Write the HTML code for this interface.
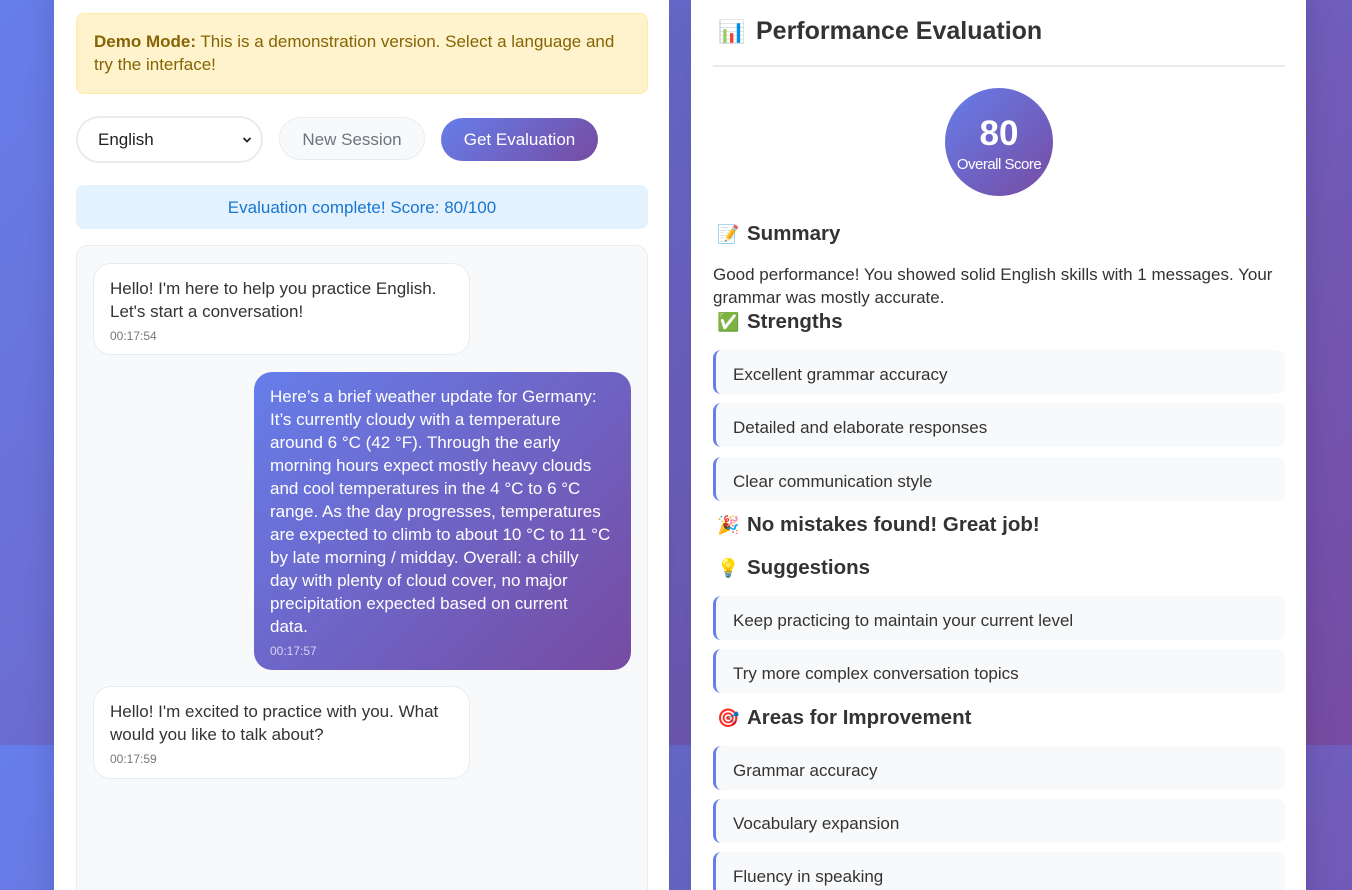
<!DOCTYPE html>
<html><head><meta charset="utf-8"><style>
*{box-sizing:border-box;margin:0;padding:0}
html,body{width:1352px;height:890px;overflow:hidden}
body{font-family:"Liberation Sans","Noto Sans CJK SC",sans-serif;color:#333;background:linear-gradient(135deg,#667eea 0%,#764ba2 100%);background-size:1352px 745px;background-repeat:repeat-y;position:relative}
.card{position:absolute;top:-20px;width:615px;height:940px;background:#fff;border-radius:16px;box-shadow:0 8px 30px rgba(0,0,0,.15)}
.l{left:54px}.r{left:691px}
.abs{position:absolute}
.demo{left:22px;top:33px;width:572px;height:81px;background:#fff3cd;border:1px solid #ffeaa7;border-radius:8px;color:#856404;font-size:17px;padding:16px 17px;line-height:23px;white-space:nowrap}
.sel{left:22px;top:136px;width:187px;height:47px;border:2px solid #e9ecef;border-radius:24px;font-size:17px;padding:12px 20px;color:#222}
.sel svg{position:absolute;right:9px;top:18px}
.btn{height:43px;border-radius:22px;font-size:17px;text-align:center;line-height:43px}
.ns{left:225px;top:137px;width:146px;background:#f8f9fa;border:1px solid #e9ecef;color:#6c757d;line-height:43px}
.ge{left:387px;top:138px;width:157px;background:linear-gradient(135deg,#667eea,#764ba2);color:#fff}
.status{left:22px;top:205px;width:572px;height:44px;background:#e3f2fd;border-radius:8px;color:#1976d2;text-align:center;line-height:46px;font-size:17px}
.chat{left:22px;top:265px;width:572px;height:700px;background:#f8f9fa;border:1px solid #e9ecef;border-radius:12px}
.msg{position:absolute;border-radius:18px;padding:13px 16px;font-size:17px;line-height:23px;white-space:nowrap}
.bot{background:#fff;border:1px solid #e9ecef;width:377px;color:#333}
.user{background:linear-gradient(135deg,#667eea,#764ba2);color:#fff;width:377px}
.t{font-size:12px;color:#777;line-height:18px;margin-top:4px}
.user .t{color:rgba(255,255,255,.7)}
h2{position:absolute;left:27px;top:37px;font-size:25px;font-weight:bold;color:#333;white-space:nowrap}
h2 i{font-style:normal;display:inline-block;width:38px;font-size:22px}
.hr{left:22px;top:85px;width:572px;height:2px;background:#e9ecef}
.circ{left:254px;top:108px;width:108px;height:108px;border-radius:50%;background:linear-gradient(135deg,#667eea,#764ba2);color:#fff;text-align:center}
.circ b{display:block;font-size:35px;margin-top:27px;line-height:38px}
.circ span{display:block;font-size:15px;letter-spacing:-.5px;margin-top:3px;white-space:nowrap}
h3{position:absolute;left:26px;font-size:20.5px;font-weight:bold;color:#333;white-space:nowrap}
h3 i{font-style:normal;display:inline-block;width:30px;font-size:18px}
.p{left:22px;top:283px;font-size:17px;line-height:23px;white-space:nowrap}
.it{position:absolute;left:22px;width:572px;height:44px;background:#f8f9fa;border-left:3px solid #667eea;border-radius:8px;font-size:17px;line-height:50px;padding-left:17px}
</style></head><body>
<div class="card l">
 <div class="abs demo"><b>Demo Mode:</b> This is a demonstration version. Select a language and<br>try the interface!</div>
 <div class="abs sel">English<svg width="10" height="8" viewBox="0 0 10 8"><path d="M1.5 2 L5 5.5 L8.5 2" stroke="#222" stroke-width="1.8" fill="none"/></svg></div>
 <div class="abs btn ns">New Session</div>
 <div class="abs btn ge">Get Evaluation</div>
 <div class="abs status">Evaluation complete! Score: 80/100</div>
 <div class="abs chat">
  <div class="msg bot" style="left:16px;top:17px;height:92px">Hello! I'm here to help you practice English.<br>Let's start a conversation!<div class="t">00:17:54</div></div>
  <div class="msg user" style="left:177px;top:126px;height:298px">Here’s a brief weather update for Germany:<br>It’s currently cloudy with a temperature<br>around 6 °C (42 °F). Through the early<br>morning hours expect mostly heavy clouds<br>and cool temperatures in the 4 °C to 6 °C<br>range. As the day progresses, temperatures<br>are expected to climb to about 10 °C to 11 °C<br>by late morning / midday. Overall: a chilly<br>day with plenty of cloud cover, no major<br>precipitation expected based on current<br>data.<div class="t">00:17:57</div></div>
  <div class="msg bot" style="left:16px;top:440px;height:93px">Hello! I'm excited to practice with you. What<br>would you like to talk about?<div class="t">00:17:59</div></div>
 </div>
</div>
<div class="card r">
 <h2><i>📊</i>Performance Evaluation</h2>
 <div class="abs hr"></div>
 <div class="abs circ"><b>80</b><span>Overall Score</span></div>
 <h3 style="top:242px"><i>📝</i>Summary</h3>
 <div class="abs p">Good performance! You showed solid English skills with 1 messages. Your<br>grammar was mostly accurate.</div>
 <h3 style="top:330px"><i>✅</i>Strengths</h3>
 <div class="it" style="top:370px">Excellent grammar accuracy</div>
 <div class="it" style="top:423px">Detailed and elaborate responses</div>
 <div class="it" style="top:477px">Clear communication style</div>
 <h3 style="top:533px"><i>🎉</i>No mistakes found! Great job!</h3>
 <h3 style="top:576px"><i>💡</i>Suggestions</h3>
 <div class="it" style="top:616px">Keep practicing to maintain your current level</div>
 <div class="it" style="top:669px">Try more complex conversation topics</div>
 <h3 style="top:726px"><i>🎯</i>Areas for Improvement</h3>
 <div class="it" style="top:766px">Grammar accuracy</div>
 <div class="it" style="top:819px">Vocabulary expansion</div>
 <div class="it" style="top:872px">Fluency in speaking</div>
</div>
</body></html>
